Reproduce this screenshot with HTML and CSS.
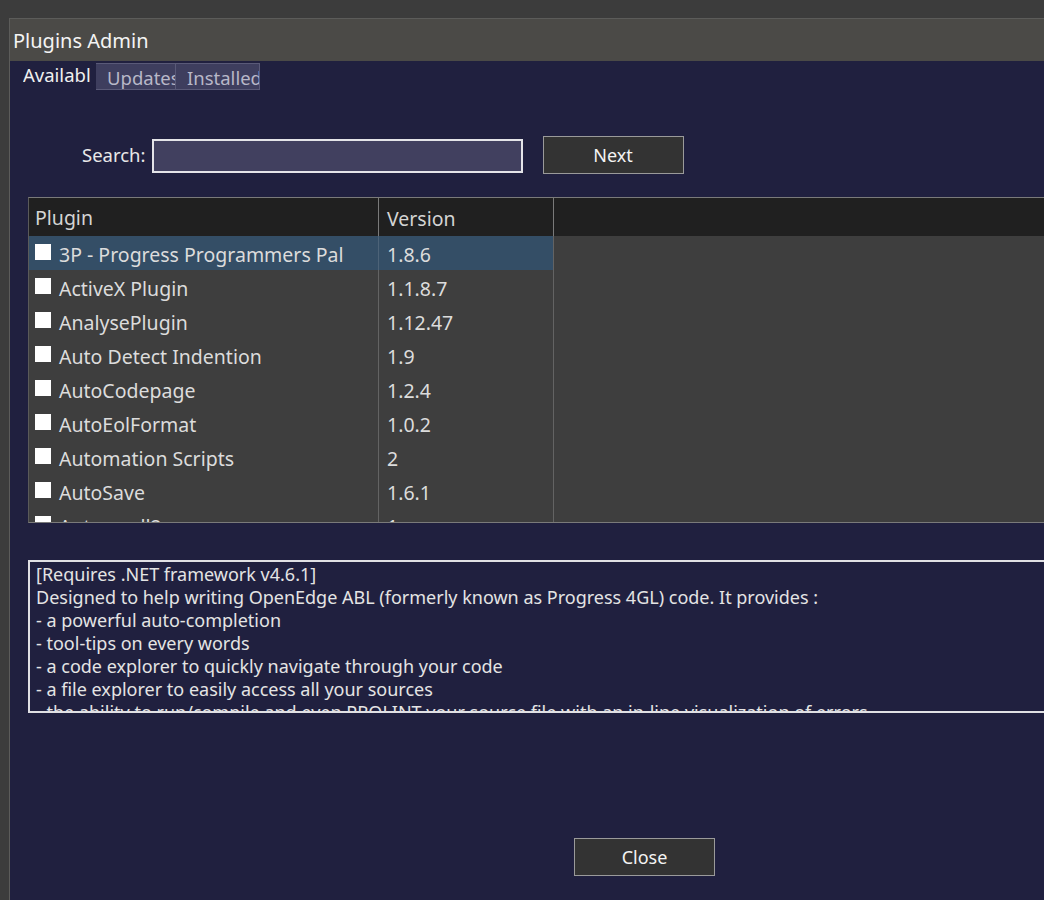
FILE: index.html
```html
<!DOCTYPE html>
<html lang="en">
  <head>
    <meta charset="UTF-8" />
    <meta name="viewport" content="width=device-width, initial-scale=1.0" />
    <title>Plugins Admin</title>
    <link rel="stylesheet" href="styles.css">
  </head>
  <body>
    <div class="window">
      <div class="titlebar">Plugins Admin</div>
      <div class="content">
        <div class="tabs">
          <span class="tab active">Available</span>
          <span class="tab">Updates</span>
          <span class="tab">Installed</span>
        </div>

        <div class="search-row">
          <label for="search">Search:</label>
          <input type="text" id="search" />
          <button class="btn next">Next</button>
        </div>

        <div class="grid">
          <div class="grid-head">
            <div class="col-plugin">Plugin</div>
            <div class="col-version">Version</div>
            <div class="col-rest"></div>
          </div>
          <div class="grid-body">
            <div class="row selected">
              <div class="col-plugin"><span class="check"></span>3P - Progress Programmers Pal</div>
              <div class="col-version">1.8.6</div>
              <div class="col-rest"></div>
            </div>
            <div class="row">
              <div class="col-plugin"><span class="check"></span>ActiveX Plugin</div>
              <div class="col-version">1.1.8.7</div>
              <div class="col-rest"></div>
            </div>
            <div class="row">
              <div class="col-plugin"><span class="check"></span>AnalysePlugin</div>
              <div class="col-version">1.12.47</div>
              <div class="col-rest"></div>
            </div>
            <div class="row">
              <div class="col-plugin"><span class="check"></span>Auto Detect Indention</div>
              <div class="col-version">1.9</div>
              <div class="col-rest"></div>
            </div>
            <div class="row">
              <div class="col-plugin"><span class="check"></span>AutoCodepage</div>
              <div class="col-version">1.2.4</div>
              <div class="col-rest"></div>
            </div>
            <div class="row">
              <div class="col-plugin"><span class="check"></span>AutoEolFormat</div>
              <div class="col-version">1.0.2</div>
              <div class="col-rest"></div>
            </div>
            <div class="row">
              <div class="col-plugin"><span class="check"></span>Automation Scripts</div>
              <div class="col-version">2</div>
              <div class="col-rest"></div>
            </div>
            <div class="row">
              <div class="col-plugin"><span class="check"></span>AutoSave</div>
              <div class="col-version">1.6.1</div>
              <div class="col-rest"></div>
            </div>
            <div class="row">
              <div class="col-plugin"><span class="check"></span>Autoscroll2</div>
              <div class="col-version">1</div>
              <div class="col-rest"></div>
            </div>
          </div>
        </div>

        <div class="description">
          <p>[Requires .NET framework v4.6.1]</p>
          <p>Designed to help writing OpenEdge ABL (formerly known as Progress 4GL) code. It provides :</p>
          <p>- a powerful auto-completion</p>
          <p>- tool-tips on every words</p>
          <p>- a code explorer to quickly navigate through your code</p>
          <p>- a file explorer to easily access all your sources</p>
          <p>- the ability to run/compile and even PROLINT your source file with an in-line visualization of errors</p>
        </div>

        <div class="footer">
          <button class="btn close">Close</button>
        </div>
      </div>
    </div>
  </body>
</html>
```

FILE: styles.css
```css
* {
  box-sizing: border-box;
  font-family: "Noto Sans", "Open Sans", sans-serif;
}
body {
  margin: 0;
  height: 900px;
  overflow: hidden;
  background-color: #3c3c3c;
}
.window {
  margin: 18px 0 0 9px;
  width: 1100px;
  height: 900px;
  border-left: 1px solid #5c5c5a;
  border-top: 1px solid #5c5c5a;
  background-color: #20203f;
}
.titlebar {
  height: 42px;
  padding: 10px 0 0 3px;
  background-color: #4b4a47;
  color: #f4f4f4;
  font-size: 20px;
  line-height: 24px;
}
.content {
  padding-left: 18px;
}

/* tabs */
.tabs {
  display: flex;
  padding-top: 2px;
  height: 30px;
  margin-left: -5px;
}
.tab {
  width: 80px;
  height: 27px;
  padding-left: 11px;
  overflow: hidden;
  white-space: nowrap;
  color: #b8b8c8;
  font-size: 18.5px;
  line-height: 27px;
  background-color: #3e3e5e;
  border: 1px solid #5a5a78;
}
.tab + .tab {
  border-left: none;
}
.tab:last-child {
  width: 84px;
}
.tab.active {
  width: 68px;
  margin-right: 5px;
  padding-left: 0;
  background: none;
  border: none;
  color: #f0f0f0;
  line-height: 24px;
}

/* search */
.search-row {
  display: flex;
  align-items: center;
  margin-top: 45px;
  padding-left: 54px;
  height: 37px;
}
.search-row label {
  color: #e8e8e8;
  font-size: 18.5px;
  margin-right: 6px;
}
.search-row input {
  width: 371px;
  height: 34px;
  margin-top: 3px;
  background-color: #41405f;
  border: 2px solid #e4e4e8;
  color: #fff;
  font-size: 17px;
}
.btn {
  width: 141px;
  height: 38px;
  background-color: #333333;
  border: 1px solid #9a9a9a;
  color: #f4f4f4;
  font-size: 18px;
  padding: 0;
}
.next {
  margin-left: 20px;
}

/* plugin list */
.grid {
  margin-top: 24px;
  width: 1100px;
  height: 326px;
  overflow: hidden;
  border-top: 1px solid #7a7a7a;
  border-bottom: 1px solid #7a7a7a;
  border-left: 1px solid #5a5a5a;
  background-color: #3e3e3e;
}
.grid-head,
.row {
  display: flex;
}
.grid-head {
  height: 38px;
  background-color: #202020;
  color: #d4d4d4;
  font-size: 19.5px;
  line-height: 41px;
}
.col-plugin {
  width: 349px;
  padding-left: 6px;
  white-space: nowrap;
  display: flex;
  align-items: center;
}
.col-version {
  width: 175px;
  padding-left: 8px;
  border-left: 1px solid #636363;
}
.col-rest {
  flex: 1;
  border-left: 1px solid #636363;
}
.grid-head .col-version,
.grid-head .col-rest {
  border-left-color: #7a7a7a;
}
.row {
  height: 34px;
  color: #dcdcdc;
  font-size: 19.5px;
  line-height: 37px;
}
.row .col-plugin {
  padding-top: 3px;
}
.row.selected .col-plugin,
.row.selected .col-version {
  background-color: #344e66;
}
.row.selected .col-version {
  border-left-color: #4d6378;
}
.check {
  width: 16px;
  height: 16px;
  margin: 0 8px 6px 0;
  background-color: #ffffff;
  flex-shrink: 0;
}

/* description */
.description {
  margin-top: 37px;
  width: 1100px;
  height: 153px;
  overflow: hidden;
  border: 2px solid #e0e0e4;
  padding: 1px 0 0 6px;
  color: #e4e4e4;
  font-size: 18px;
  line-height: 23px;
}
.description p {
  margin: 0;
  white-space: nowrap;
}

.footer {
  padding: 125px 0 0 546px;
}
```
